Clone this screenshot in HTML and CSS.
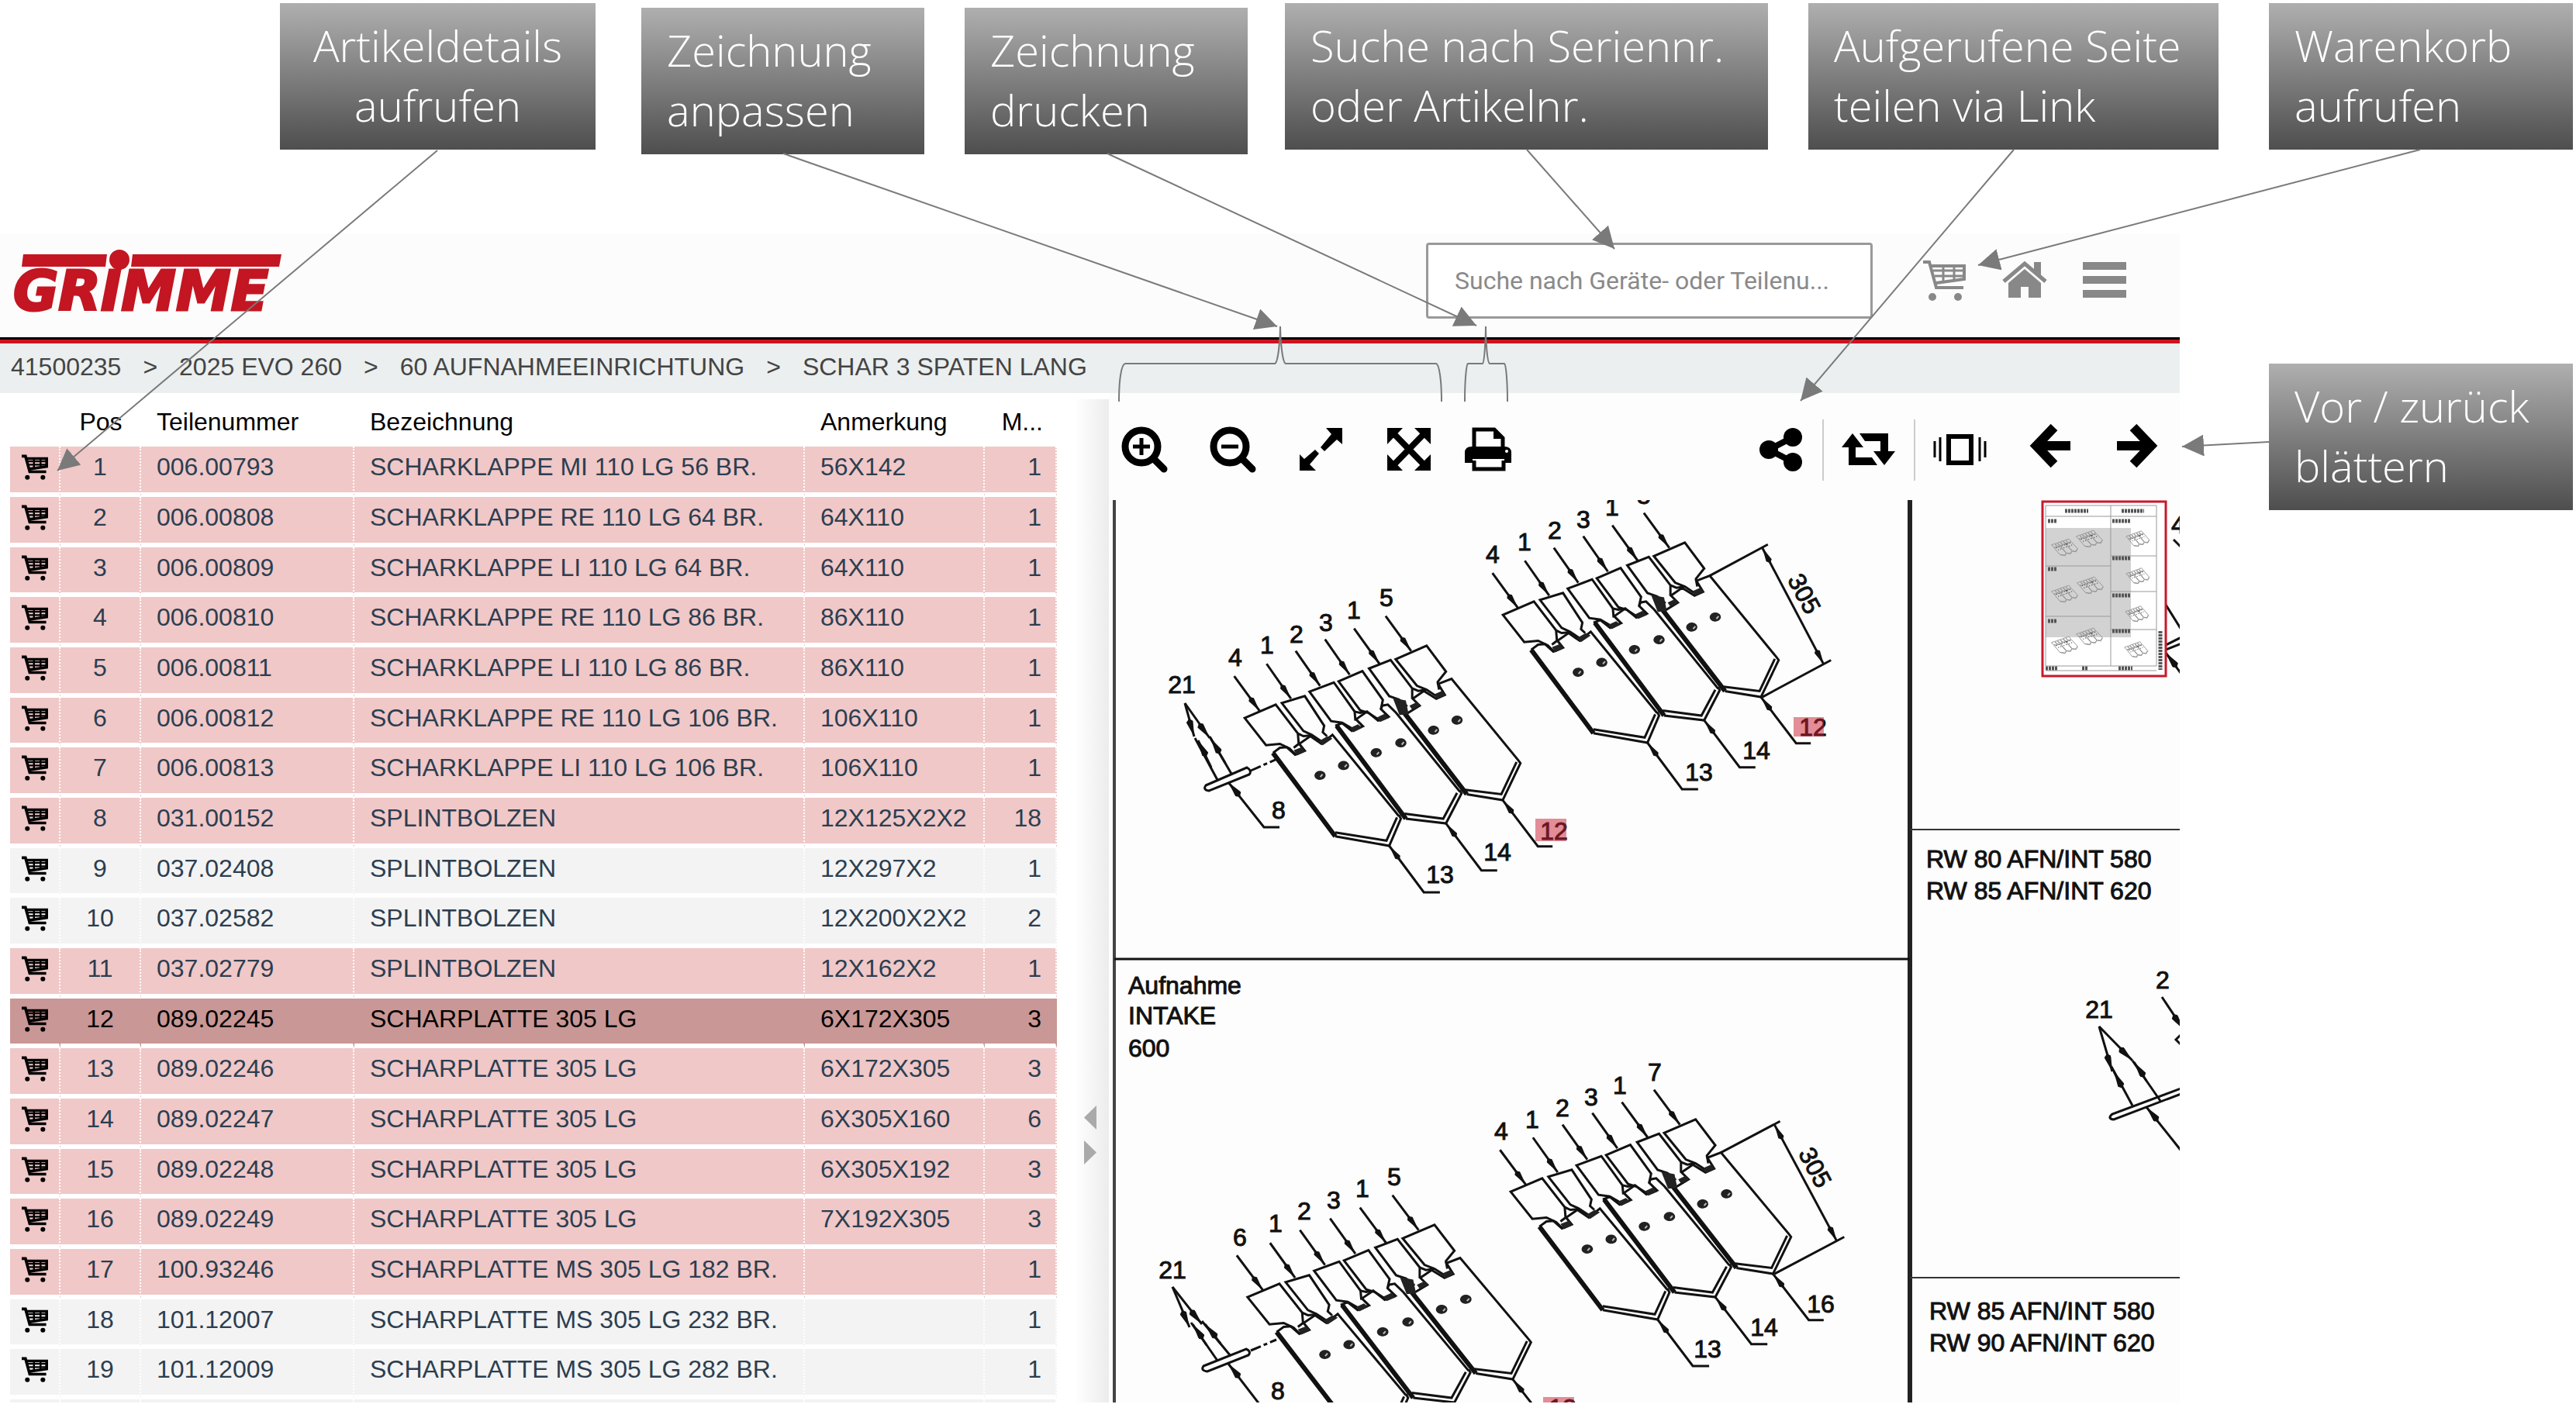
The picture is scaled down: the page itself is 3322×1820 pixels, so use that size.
FILE: index.html
```html
<!DOCTYPE html>
<html lang="de">
<head>
    <meta charset="UTF-8">
    <meta name="viewport" content="width=device-width, initial-scale=1.0">
    <title>GRIMME - SCHAR 3 SPATEN LANG</title>
    <link rel="stylesheet" href="styles.css">
</head>
<body>
    <!-- shared icons -->
    <svg class="defs" aria-hidden="true">
        <symbol id="cart" viewBox="0 0 56 54">
            <path class="cart-frame" d="M0 3H8L17 36H52M11 8H53V25L17 30" fill="none" stroke="currentColor"/>
            <path class="cart-grid" d="M13 14H53M15 21H53M26 8V29M40 8V27" fill="none" stroke="currentColor"/>
            <circle cx="12" cy="48" r="5" fill="currentColor"/>
            <circle cx="45" cy="48" r="5" fill="currentColor"/>
        </symbol>
    </svg>

    <div class="callouts">
        <p class="callout center">Artikeldetails<br>aufrufen</p>
        <p class="callout low">Zeichnung<br>anpassen</p>
        <p class="callout low">Zeichnung<br>drucken</p>
        <p class="callout">Suche nach Seriennr.<br>oder Artikelnr.</p>
        <p class="callout">Aufgerufene Seite<br>teilen via Link</p>
        <p class="callout">Warenkorb<br>aufrufen</p>
    </div>

    <div class="content">
        <div class="app">
            <header class="header">
                <svg class="logo" viewBox="0 0 350 84" role="img" aria-label="GRIMME">
                    <path d="M12 8H120L118 24H10ZM153 8H345L342 24H151Z" fill="#c31622"/>
                    <circle cx="136" cy="15" r="13" fill="#c31622"/>
                    <text x="-1" y="80" class="logo-text">GRIMME</text>
                </svg>
                <input class="search" type="text" aria-label="Suche" placeholder="Suche nach Geräte- oder Teilenu...">
                <nav class="header-nav">
                    <a href="#cart" aria-label="Warenkorb"><svg width="56" height="54"><use href="#cart"/></svg></a>
                    <a href="#home" aria-label="Startseite">
                        <svg width="58" height="54" viewBox="0 0 58 54">
                            <path d="M2 28L29 5L56 28" fill="none" stroke="currentColor" stroke-width="5"/>
                            <path d="M41 3H50V22L41 14ZM29 12L50 30V49H34V35H24V49H8V30Z" fill="currentColor"/>
                        </svg>
                    </a>
                    <a href="#menu" aria-label="Menü">
                        <svg width="56" height="54" viewBox="0 0 56 54">
                            <path d="M0 8H56M0 26H56M0 44H56" stroke="currentColor" stroke-width="10"/>
                        </svg>
                    </a>
                </nav>
            </header>

            <nav class="breadcrumb">
                <a href="#">41500235</a><span>&gt;</span>
                <a href="#">2025 EVO 260</a><span>&gt;</span>
                <a href="#">60 AUFNAHMEEINRICHTUNG</a><span>&gt;</span>
                <a href="#">SCHAR 3 SPATEN LANG</a>
            </nav>

            <div class="workspace">
                <div class="parts">
                    <table class="parts-table">
                        <colgroup>
                            <col class="col-cart"><col class="col-pos"><col class="col-nr"><col><col class="col-note"><col class="col-qty">
                        </colgroup>
                        <thead>
                            <tr><th></th><th>Pos</th><th>Teilenummer</th><th>Bezeichnung</th><th>Anmerkung</th><th>M...</th></tr>
                        </thead>
                        <tbody>
                            <tr><td><button aria-label="Details"><svg><use href="#cart"/></svg></button></td><td>1</td><td>006.00793</td><td>SCHARKLAPPE MI 110 LG 56 BR.</td><td>56X142</td><td>1</td></tr>
                            <tr><td><button aria-label="Details"><svg><use href="#cart"/></svg></button></td><td>2</td><td>006.00808</td><td>SCHARKLAPPE RE 110 LG 64 BR.</td><td>64X110</td><td>1</td></tr>
                            <tr><td><button aria-label="Details"><svg><use href="#cart"/></svg></button></td><td>3</td><td>006.00809</td><td>SCHARKLAPPE LI 110 LG 64 BR.</td><td>64X110</td><td>1</td></tr>
                            <tr><td><button aria-label="Details"><svg><use href="#cart"/></svg></button></td><td>4</td><td>006.00810</td><td>SCHARKLAPPE RE 110 LG 86 BR.</td><td>86X110</td><td>1</td></tr>
                            <tr><td><button aria-label="Details"><svg><use href="#cart"/></svg></button></td><td>5</td><td>006.00811</td><td>SCHARKLAPPE LI 110 LG 86 BR.</td><td>86X110</td><td>1</td></tr>
                            <tr><td><button aria-label="Details"><svg><use href="#cart"/></svg></button></td><td>6</td><td>006.00812</td><td>SCHARKLAPPE RE 110 LG 106 BR.</td><td>106X110</td><td>1</td></tr>
                            <tr><td><button aria-label="Details"><svg><use href="#cart"/></svg></button></td><td>7</td><td>006.00813</td><td>SCHARKLAPPE LI 110 LG 106 BR.</td><td>106X110</td><td>1</td></tr>
                            <tr><td><button aria-label="Details"><svg><use href="#cart"/></svg></button></td><td>8</td><td>031.00152</td><td>SPLINTBOLZEN</td><td>12X125X2X2</td><td>18</td></tr>
                            <tr class="plain"><td><button aria-label="Details"><svg><use href="#cart"/></svg></button></td><td>9</td><td>037.02408</td><td>SPLINTBOLZEN</td><td>12X297X2</td><td>1</td></tr>
                            <tr class="plain"><td><button aria-label="Details"><svg><use href="#cart"/></svg></button></td><td>10</td><td>037.02582</td><td>SPLINTBOLZEN</td><td>12X200X2X2</td><td>2</td></tr>
                            <tr><td><button aria-label="Details"><svg><use href="#cart"/></svg></button></td><td>11</td><td>037.02779</td><td>SPLINTBOLZEN</td><td>12X162X2</td><td>1</td></tr>
                            <tr class="selected"><td><button aria-label="Details"><svg><use href="#cart"/></svg></button></td><td>12</td><td>089.02245</td><td>SCHARPLATTE 305 LG</td><td>6X172X305</td><td>3</td></tr>
                            <tr><td><button aria-label="Details"><svg><use href="#cart"/></svg></button></td><td>13</td><td>089.02246</td><td>SCHARPLATTE 305 LG</td><td>6X172X305</td><td>3</td></tr>
                            <tr><td><button aria-label="Details"><svg><use href="#cart"/></svg></button></td><td>14</td><td>089.02247</td><td>SCHARPLATTE 305 LG</td><td>6X305X160</td><td>6</td></tr>
                            <tr><td><button aria-label="Details"><svg><use href="#cart"/></svg></button></td><td>15</td><td>089.02248</td><td>SCHARPLATTE 305 LG</td><td>6X305X192</td><td>3</td></tr>
                            <tr><td><button aria-label="Details"><svg><use href="#cart"/></svg></button></td><td>16</td><td>089.02249</td><td>SCHARPLATTE 305 LG</td><td>7X192X305</td><td>3</td></tr>
                            <tr><td><button aria-label="Details"><svg><use href="#cart"/></svg></button></td><td>17</td><td>100.93246</td><td>SCHARPLATTE MS 305 LG 182 BR.</td><td></td><td>1</td></tr>
                            <tr class="plain"><td><button aria-label="Details"><svg><use href="#cart"/></svg></button></td><td>18</td><td>101.12007</td><td>SCHARPLATTE MS 305 LG 232 BR.</td><td></td><td>1</td></tr>
                            <tr class="plain"><td><button aria-label="Details"><svg><use href="#cart"/></svg></button></td><td>19</td><td>101.12009</td><td>SCHARPLATTE MS 305 LG 282 BR.</td><td></td><td>1</td></tr>
                            <tr class="plain"><td></td><td></td><td></td><td></td><td></td><td></td></tr>
                        </tbody>
                    </table>
                </div>

                <div class="splitter">
                    <svg width="16" height="76" viewBox="0 0 16 76">
                        <path d="M16 0V31L0 15.500ZM0 45V76L16 60.500Z" fill="#aaa"/>
                    </svg>
                </div>

                <div class="viewer">
                    <div class="toolbar">
                        <div class="tools">
                            <button aria-label="Vergrößern">
                                <svg width="60" height="60" viewBox="0 0 60 60" fill="none" stroke="currentColor">
                                    <circle cx="26" cy="26" r="21" stroke-width="9"/>
                                    <path d="M42 42L55 55" stroke-width="9" stroke-linecap="round"/>
                                    <path d="M15 26H37M26 15V37" stroke-width="5"/>
                                </svg>
                            </button>
                            <button aria-label="Verkleinern">
                                <svg width="60" height="60" viewBox="0 0 60 60" fill="none" stroke="currentColor">
                                    <circle cx="26" cy="26" r="21" stroke-width="9"/>
                                    <path d="M42 42L55 55" stroke-width="9" stroke-linecap="round"/>
                                    <path d="M15 26H37" stroke-width="5"/>
                                </svg>
                            </button>
                            <button aria-label="Breite anpassen">
                                <svg width="60" height="60" viewBox="0 0 60 60">
                                    <path d="M36 2H57V23L50 17L34 32L29 27L43 10ZM2 57V36L8 42L22 30L27 35L15 49L23 57Z" fill="currentColor"/>
                                </svg>
                            </button>
                            <button aria-label="Einpassen">
                                <svg width="60" height="60" viewBox="0 0 60 60">
                                    <path d="M10 10L48 49M48 10L10 49" stroke="currentColor" stroke-width="8"/>
                                    <path d="M1 2H21L1 23ZM57 2V23L36 2ZM1 57V36L21 57ZM57 57H36L57 36Z" fill="currentColor"/>
                                </svg>
                            </button>
                        </div>
                        <button class="print" aria-label="Drucken">
                            <svg width="60" height="60" viewBox="0 0 60 60">
                                <path d="M12 28V4H38L49 15V28M12 44V55H50V44" fill="none" stroke="currentColor" stroke-width="5"/>
                                <path d="M37 2L51 16H37Z" fill="currentColor"/>
                                <path d="M9 26H51Q60 26 60 34V47H51V42H10V47H0V34Q0 26 9 26Z" fill="currentColor"/>
                                <circle cx="54" cy="32" r="2" fill="#fff"/>
                            </svg>
                        </button>
                        <div class="tools-right">
                            <button aria-label="Teilen">
                                <svg width="58" height="56" viewBox="0 0 58 56">
                                    <path d="M43 12L12 28L43 44" fill="none" stroke="currentColor" stroke-width="8"/>
                                    <circle cx="43" cy="12" r="12"/><circle cx="12" cy="28" r="12"/><circle cx="43" cy="44" r="12"/>
                                </svg>
                            </button>
                            <span class="separator"></span>
                            <button aria-label="Drehen">
                                <svg width="70" height="42" viewBox="0 0 70 42">
                                    <path d="M0 18L14 0L28 18H18V31H39L46 41H9V18ZM23 0H60V23H69L55 41L41 23H50V10H30Z"/>
                                </svg>
                            </button>
                            <span class="separator"></span>
                            <button aria-label="Karussell">
                                <svg width="70" height="40" viewBox="0 0 70 40">
                                    <path d="M20 3H49V37H20Z" fill="none" stroke="currentColor" stroke-width="6"/>
                                    <path d="M9 4V35M60 4V35M2 9V30M67 9V30" stroke="currentColor" stroke-width="3"/>
                                </svg>
                            </button>
                        </div>
                        <div class="paging">
                            <button aria-label="Zurück">
                                <svg width="54" height="66" viewBox="0 0 54 66">
                                    <path d="M32 4L9 28L32 52M10 28H53" fill="none" stroke="currentColor" stroke-width="12"/>
                                </svg>
                            </button>
                            <button aria-label="Vor">
                                <svg width="54" height="66" viewBox="0 0 54 66">
                                    <path d="M22 4L45 28L22 52M44 28H1" fill="none" stroke="currentColor" stroke-width="12"/>
                                </svg>
                            </button>
                        </div>
                    </div>

                    <svg class="drawing" viewBox="1430 645 1381 1164" preserveAspectRatio="xMinYMin slice">
                        <defs>
                            <marker id="tip" viewBox="0 0 66 26" refX="66" refY="13" markerWidth="66" markerHeight="26" markerUnits="userSpaceOnUse" orient="auto-start-reverse">
                                <path d="M0 13L12 2L66 13L12 24Z"/>
                            </marker>
                            <marker id="tip-s" viewBox="0 0 24 9" refX="24" refY="4" markerWidth="24" markerHeight="9" markerUnits="userSpaceOnUse" orient="auto-start-reverse">
                                <path d="M0 4L4 0L24 4L4 9Z"/>
                            </marker>
                            <!-- three share plates with six flaps -->
                            <g id="plates">
                                <path d="M340 575L358 560L355 520L275 408L163 460L240 565L290 560L325 578L345 600"/>
                                <path d="M440 550L405 525L375 510L297 402L380 375L450 490L445 515L460 530"/>
                                <path d="M550 500L515 478L475 472L397 358L485 322L560 435L563 470"/>
                                <path d="M645 465L610 440L580 430L502 318L588 278L662 390L655 425"/>
                                <path d="M750 415L720 388L685 375L612 268L690 235L768 345L768 385"/>
                                <path d="M855 375L820 350L785 335L708 232L820 180L890 280L860 320L865 350"/>
                                <path d="M355 520L375 530L400 528M560 435L580 440L605 435M768 345L790 355L820 350"/>
                                <path d="M265 595L290 575L315 573L345 602L380 587L360 560L400 530L440 560L480 525L720 840"/>
                                <path d="M490 918L685 955L727 850L720 835M490 903L675 935L713 845"/>
                                <path d="M490 490L515 480L550 510L590 492L565 465L605 435L645 470L683 455L655 425L660 412L680 408L710 440L940 745"/>
                                <path d="M745 850L890 868L946 752L940 740M740 830L880 850L930 750"/>
                                <path d="M745 445L795 412L770 385L810 355L855 385L886 370L862 328L910 308L1150 622L1159 635L1095 778L965 755M960 738L1090 755L1145 630"/>
                                <path class="heavy" d="M265 595L490 918M495 490L745 850M725 420L965 755"/>
                                <path class="solid" d="M698 382L745 392L755 445L722 448Z"/>
                                <path class="solid" d="M340 585L370 572L382 590L352 605ZM430 550L462 530L480 540L445 565ZM545 498L572 484L588 498L556 515ZM640 458L668 444L684 460L652 475ZM758 412L785 398L798 412L768 428ZM848 368L875 355L888 370L858 387Z"/>
                                <path class="solid" d="M415 680a20 17 0 1 0 40 5a20 18 0 1 0 -40 -5M500 642a20 17 0 1 0 40 5a20 18 0 1 0 -40 -5M618 592a20 17 0 1 0 40 5a20 18 0 1 0 -40 -5M707 554a20 17 0 1 0 40 5a20 18 0 1 0 -40 -5M825 505a20 17 0 1 0 40 5a20 18 0 1 0 -40 -5M910 466a20 17 0 1 0 40 5a20 18 0 1 0 -40 -5"/>
                                <path class="speck" d="M436 688l8 -10M524 650l8 -10M640 602l8 -10M730 563l8 -10M850 514l8 -10M934 475l8 -10"/>
                            </g>
                            <g id="leaders">
                                <path d="M125 298L217 433" marker-end="url(#tip)"/>
                                <path d="M242 250L330 385" marker-end="url(#tip)"/>
                                <path d="M347 200L435 335" marker-end="url(#tip)"/>
                                <path d="M453 155L542 292" marker-end="url(#tip)"/>
                                <path d="M558 113L650 250" marker-end="url(#tip)"/>
                                <path d="M672 65L764 200" marker-end="url(#tip)"/>
                                <path d="M685 955L810 1135H868" marker-start="url(#tip)"/>
                                <path d="M890 868L1018 1050H1075" marker-start="url(#tip)"/>
                                <path d="M1095 778L1222 957H1275" marker-start="url(#tip)"/>
                            </g>
                            <g id="dimension">
                                <path d="M910 308L1120 187M1100 778L1348 635"/>
                                <path d="M1100 200L1322 652" marker-start="url(#tip)" marker-end="url(#tip)"/>
                            </g>
                        </defs>

                        <g class="frame">
                            <path d="M1437 645V1809" stroke="#444" stroke-width="4"/>
                            <path d="M2463 645V1809" stroke="#222" stroke-width="6"/>
                            <path d="M1437 1237H2463" stroke="#111" stroke-width="3"/>
                            <path d="M2463 1070H2811M2463 1648H2811" stroke="#333" stroke-width="2"/>
                        </g>

                        <g class="lines">
                            <g transform="matrix(.357 0 0 .333 1880 640)"><use href="#plates"/><use href="#leaders"/><use href="#dimension"/></g>
                            <g transform="matrix(.357 0 0 .333 1547 773)"><use href="#plates"/><use href="#leaders"/></g>
                            <g transform="matrix(.367 0 0 .333 1549 1520)"><use href="#plates"/><use href="#leaders"/></g>
                            <g transform="matrix(.363 0 0 .333 1889 1384)"><use href="#plates"/><use href="#leaders"/><use href="#dimension"/></g>

                            <!-- split pins -->
                            <path d="M1555 1013L1608 990Q1615 994 1611 999L1559 1020Q1551 1019 1555 1013Z"/>
                            <path d="M1613 994L1649 978" stroke-dasharray="14 4 5 4"/>
                            <path d="M1528 907L1540 950" marker-end="url(#tip-s)"/>
                            <path d="M1570 1006L1541 952" /><path d="M1562 990L1545 955" marker-end="url(#tip-s)"/>
                            <path d="M1528 907L1560 952" marker-end="url(#tip-s)"/>
                            <path d="M1588 998L1560 950"/><path d="M1580 984L1561 952" marker-end="url(#tip-s)"/>
                            <path d="M1584 1009L1630 1067H1650" marker-start="url(#tip-s)"/>

                            <path d="M1552 1762L1607 1740Q1614 1743 1610 1748L1557 1769Q1548 1768 1552 1762Z"/>
                            <path d="M1613 1742L1646 1728" stroke-dasharray="14 4 5 4"/>
                            <path d="M1512 1660L1534 1712" marker-end="url(#tip-s)"/>
                            <path d="M1570 1755L1536 1706"/><path d="M1556 1735L1538 1708" marker-end="url(#tip-s)"/>
                            <path d="M1512 1660L1550 1708" marker-end="url(#tip-s)"/>
                            <path d="M1587 1749L1550 1704"/><path d="M1574 1733L1554 1708" marker-end="url(#tip-s)"/>
                            <path d="M1584 1759L1624 1811" marker-start="url(#tip-s)"/>

                            <path d="M2815 1403L2724 1437Q2717 1443 2726 1444L2815 1410"/>
                            <path d="M2707 1324L2724 1382" marker-end="url(#tip-s)"/>
                            <path d="M2750 1426L2723 1376"/><path d="M2736 1402L2726 1382" marker-end="url(#tip-s)"/>
                            <path d="M2707 1324L2750 1368" marker-end="url(#tip-s)"/>
                            <path d="M2786 1420L2750 1368"/><path d="M2768 1394L2752 1370" marker-end="url(#tip-s)"/>
                            <path d="M2768 1428L2815 1487" marker-start="url(#tip-s)"/>
                            <path d="M2788 1286L2816 1328" marker-end="url(#tip-s)"/>
                            <path d="M2812 1335L2806 1341L2813 1348"/>
                            <path d="M2793 780L2813 812M2793 832L2813 822M2793 838L2813 830M2803 696L2813 706"/>
                            <path d="M2793 842L2815 872" marker-start="url(#tip-s)"/>
                        </g>

                        <g class="labels">
                            <text x="1925" y="726">4</text><text x="1966" y="710">1</text><text x="2005" y="695">2</text><text x="2042" y="681">3</text><text x="2079" y="665">1</text><text x="2120" y="650">5</text>
                            <text x="2191" y="1007">13</text><text x="2265" y="979">14</text><text x="2338" y="949">12</text>
                            <text transform="translate(2317 771) rotate(62)">305</text>

                            <text x="1524" y="894">21</text><text x="1593" y="859">4</text><text x="1634" y="843">1</text><text x="1672" y="829">2</text><text x="1710" y="814">3</text><text x="1746" y="798">1</text><text x="1788" y="782">5</text>
                            <text x="1649" y="1056">8</text><text x="1857" y="1139">13</text><text x="1931" y="1110">14</text><text x="2004" y="1083">12</text>

                            <text x="1512" y="1649">21</text><text x="1599" y="1607">6</text><text x="1645" y="1589">1</text><text x="1682" y="1573">2</text><text x="1720" y="1559">3</text><text x="1757" y="1544">1</text><text x="1798" y="1529">5</text>
                            <text x="1648" y="1805">8</text><text x="2015" y="1827">12</text>

                            <text x="1936" y="1470">4</text><text x="1976" y="1455">1</text><text x="2015" y="1440">2</text><text x="2052" y="1426">3</text><text x="2089" y="1411">1</text><text x="2134" y="1394">7</text>
                            <text x="2202" y="1751">13</text><text x="2275" y="1723">14</text><text x="2348" y="1693">16</text>
                            <text transform="translate(2331 1511) rotate(62)">305</text>

                            <text x="2707" y="1313">21</text><text x="2789" y="1275">2</text><text x="2809" y="688">4</text>
                        </g>
                        <g class="captions">
                            <text x="1455" y="1282">Aufnahme</text><text x="1455" y="1321">INTAKE</text><text x="1455" y="1363">600</text>
                            <text x="2484" y="1119">RW 80 AFN/INT 580</text><text x="2484" y="1160">RW 85 AFN/INT 620</text>
                            <text x="2488" y="1702">RW 85 AFN/INT 580</text><text x="2488" y="1743">RW 90 AFN/INT 620</text>
                        </g>
                        <g class="marks">
                            <path d="M2313 925H2352V950H2313ZM1980 1056H2020V1085H1980ZM1990 1802H2030V1830H1990Z"/>
                        </g>

                        <!-- overview map -->
                        <path d="M2634 647H2793V872H2634Z" fill="#fff" stroke="#c8182c" stroke-width="3"/>
                        <path d="M2638 681H2748V822H2638Z" fill="#d2d2d2"/>
                        <g class="mini">
                            <path d="M2638 859V652H2781V859ZM2638 666H2781M2722 652V859M2638 730H2722M2638 795H2722M2722 717H2781M2722 763H2781M2722 812H2781M2638 865H2781"/>
                            <path class="mini-text" d="M2663 659H2693M2736 659H2765M2641 672H2652M2641 734H2652M2641 801H2652M2724 672H2748M2724 720H2748M2724 768H2748M2724 814H2748M2638 862H2654M2685 862H2693M2732 862H2750M2786 814V864"/>
                            <use href="#plates" transform="matrix(.034 0 0 .028 2640 690)"/><use href="#plates" transform="matrix(.034 0 0 .028 2672 679)"/>
                            <use href="#plates" transform="matrix(.034 0 0 .028 2640 750)"/><use href="#plates" transform="matrix(.034 0 0 .028 2673 739)"/>
                            <use href="#plates" transform="matrix(.034 0 0 .028 2640 816)"/><use href="#plates" transform="matrix(.034 0 0 .028 2672 805)"/>
                            <use href="#plates" transform="matrix(.03 0 0 .026 2737 680)"/><use href="#plates" transform="matrix(.03 0 0 .026 2737 728)"/>
                            <use href="#plates" transform="matrix(.03 0 0 .026 2736 777)"/><use href="#plates" transform="matrix(.03 0 0 .026 2735 823)"/>
                        </g>
                    </svg>
                </div>
            </div>
        </div>

        <aside class="side">
            <p class="callout">Vor / zurück<br>blättern</p>
        </aside>
    </div>

    <!-- arrows and brackets over the application -->
    <svg class="arrows" viewBox="0 0 3322 1820" preserveAspectRatio="none" aria-hidden="true">
        <defs>
            <marker id="head" viewBox="0 0 28 28" refX="28" refY="14" markerWidth="28" markerHeight="28" markerUnits="userSpaceOnUse" orient="auto">
                <path d="M0 0L28 14L0 28Z" fill="#7a7a7a"/>
            </marker>
        </defs>
        <g fill="none" stroke="#7a7a7a" stroke-width="2">
            <path d="M564 194L74 607" marker-end="url(#head)"/>
            <path d="M1010 198L1647 421" marker-end="url(#head)"/>
            <path d="M1428 198L1904 420" marker-end="url(#head)"/>
            <path d="M1969 193L2082 321" marker-end="url(#head)"/>
            <path d="M2597 193L2322 517" marker-end="url(#head)"/>
            <path d="M3121 193L2551 342" marker-end="url(#head)"/>
            <path d="M2926 570L2814 576" marker-end="url(#head)"/>
            <path d="M1443 518C1443 490 1446 470 1451 469H1644C1648 468 1651 440 1651 421C1651 440 1654 468 1658 469H1852C1856 470 1859 490 1859 518"/>
            <path d="M1889 518C1889 490 1891 470 1893 469H1912C1914 468 1916 440 1916 421C1916 440 1918 468 1921 469H1940C1942 470 1944 490 1944 518"/>
        </g>
    </svg>
</body>
</html>
```
FILE: styles.css
```css
* {
    box-sizing: border-box;
}
body {
    margin: 0;
    height: 100vh;
    display: flex;
    flex-direction: column;
    position: relative;
    background: #fff;
    font-family: "Liberation Sans", Arial, sans-serif;
    font-size: 32px;
    overflow: hidden;
}
.defs {
    position: absolute;
    width: 0;
    height: 0;
}
button {
    border: none;
    background: none;
    padding: 0;
    color: #000;
    cursor: pointer;
}
button svg, .header-nav svg {
    display: block;
}
.cart-frame {
    stroke-width: var(--cart-frame, 4px);
}
.cart-grid {
    stroke-width: var(--cart-grid, 3px);
}

/* callouts */
.callouts {
    display: grid;
    grid-template-columns: 361fr 407fr 59fr 365fr 52fr 365fr 48fr 623fr 52fr 529fr 65fr 392fr 4fr;
    align-items: start;
    height: 301px;
    padding-top: 4px;
}
.callouts .callout:nth-child(1) { grid-column: 2; }
.callouts .callout:nth-child(2) { grid-column: 4; }
.callouts .callout:nth-child(3) { grid-column: 6; }
.callouts .callout:nth-child(4) { grid-column: 8; }
.callouts .callout:nth-child(5) { grid-column: 10; }
.callouts .callout:nth-child(6) { grid-column: 12; }
.callout {
    margin: 0;
    min-width: 0;
    padding: 16px 0 19px 33px;
    background: linear-gradient(#afafaf, #4e4e4e);
    color: #fff;
    font-family: "Open Sans", sans-serif;
    font-weight: 300;
    font-size: 56px;
    line-height: 77px;
    white-space: nowrap;
}
.callout.center {
    padding-left: 0;
    text-align: center;
}
.callout.low {
    margin-top: 6px;
}
.arrows {
    position: absolute;
    left: 0;
    top: 0;
    width: 100%;
    height: 100%;
    pointer-events: none;
}

.content {
    flex: 1;
    min-height: 0;
    display: grid;
    grid-template-columns: minmax(0, 2811fr) minmax(0, 511fr);
    grid-template-rows: minmax(0, 1fr);
    padding-bottom: 11px;
}
.side {
    display: grid;
    grid-template-columns: 115fr 392fr 4fr;
    align-items: start;
    padding-top: 168px;
}
.side .callout {
    grid-column: 2;
}

/* application */
.app {
    display: flex;
    flex-direction: column;
    min-height: 0;
}
.header {
    display: flex;
    align-items: center;
    height: 137px;
    padding: 0 69px 13px 18px;
    border-bottom: 3px solid #000;
    background: #fcfcfc;
}
.logo {
    width: 350px;
    height: 84px;
    overflow: visible;
}
.logo-text {
    font-family: "DejaVu Sans", sans-serif;
    font-weight: bold;
    font-style: italic;
    font-size: 71px;
    fill: #c31622;
    stroke: #c31622;
    stroke-width: 3px;
}
.search {
    margin-left: auto;
    width: 576px;
    height: 98px;
    padding: 0 34px;
    border: 3px solid #999;
    border-radius: 4px;
    background: #fff;
    font-family: Roboto, sans-serif;
    font-size: 32px;
}
.search::placeholder {
    color: #8a8a8a;
}
.header-nav {
    display: flex;
    gap: 46px;
    margin-left: 65px;
}
.header-nav a {
    color: #888;
}
.breadcrumb {
    display: flex;
    align-items: center;
    gap: 28px;
    height: 69px;
    padding: 0 14px 4px;
    border-top: 5px solid #cc1420;
    background: #ebefef;
    color: #444;
}
.breadcrumb a {
    color: #444;
    text-decoration: none;
}
.workspace {
    flex: 1;
    min-height: 0;
    display: grid;
    grid-template-columns: minmax(0, 1386fr) 44px minmax(0, 1381fr);
    grid-template-rows: minmax(0, 1fr);
    background: #fff;
}

/* parts list */
.parts {
    overflow: hidden;
    padding: 0 23px 0 13px;
}
.parts-table {
    width: 100%;
    table-layout: fixed;
    border-collapse: separate;
    border-spacing: 0;
    line-height: 36px;
    color: #2c3e50;
}
.col-cart { width: 65px; }
.col-pos { width: 104px; }
.col-nr { width: 275px; }
.col-note { width: 232px; }
.col-qty { width: 93px; }
.parts-table th {
    height: 69px;
    padding: 4px 0 0 20px;
    text-align: left;
    font-weight: normal;
    color: #000;
}
.parts-table td {
    height: 65px;
    padding: 8px 0 0 20px;
    vertical-align: top;
    white-space: nowrap;
    background: #f0c8c8;
    border-bottom: 6px solid #fff;
    border-right: 2px dotted #fff;
}
.parts-table tr:nth-child(3n) td {
    height: 64px;
}
.parts-table td:nth-child(1) {
    padding: 10px 0 0 15px;
}
.parts-table th:nth-child(2), .parts-table td:nth-child(2) {
    padding-left: 0;
    text-align: center;
}
.parts-table th:nth-child(6), .parts-table td:nth-child(6) {
    padding-left: 0;
    padding-right: 18px;
    text-align: right;
}
.parts-table .plain td {
    background: #f3f3f3;
}
.parts-table .selected td {
    background: #c99795;
    border-right-color: #c99795;
    color: #000;
}
.parts-table button svg {
    --cart-frame: 6px;
    --cart-grid: 4px;
    width: 34px;
    height: 34px;
}

.splitter {
    display: flex;
    align-items: flex-end;
    justify-content: center;
    margin-top: 8px;
    padding: 0 5px 307px 0;
    background: linear-gradient(to right, #fff, #ececec);
}

/* drawing viewer */
.viewer {
    display: flex;
    flex-direction: column;
    min-height: 0;
    background: #fdfdfd;
}
.toolbar {
    display: flex;
    align-items: center;
    height: 138px;
    padding: 8px 28px 0 16px;
}
.tools {
    display: flex;
    gap: 54px;
}
.print {
    margin-left: 41px;
}
.tools-right {
    display: flex;
    align-items: center;
    gap: 23px;
    margin-left: auto;
    margin-right: 54px;
}
.separator {
    width: 2px;
    height: 79px;
    background: #ccc;
}
.paging {
    display: flex;
    gap: 58px;
}
.drawing {
    display: block;
    width: 100%;
    flex: 1;
    min-height: 0;
    overflow: hidden;
}
.frame, .lines, .mini {
    fill: none;
}
.lines {
    --heavy: 6px;
    --speck: 2px;
    stroke: #111;
    stroke-width: 3px;
}
.lines path, .mini path {
    vector-effect: non-scaling-stroke;
}
#plates path, #leaders path, #dimension path {
    vector-effect: non-scaling-stroke;
}
#tip path, #tip-s path {
    fill: #111;
    stroke: none;
}
#plates .heavy {
    stroke-width: var(--heavy);
}
#plates .solid {
    fill: #222;
    stroke: none;
}
#plates .speck {
    stroke: #bbb;
    stroke-width: var(--speck);
}
.mini {
    --heavy: 1px;
    --speck: 0px;
    stroke: #999;
    stroke-width: 1px;
}
.mini-text {
    stroke: #555;
    stroke-width: 5px;
    stroke-dasharray: 3 1;
}
.labels, .captions {
    font-family: "Liberation Sans", Arial, sans-serif;
    font-size: 32px;
    fill: #111;
    stroke: #111;
    stroke-width: 1px;
}
.labels {
    text-anchor: middle;
}
.marks {
    fill: #c81e32;
    fill-opacity: .5;
}
```
